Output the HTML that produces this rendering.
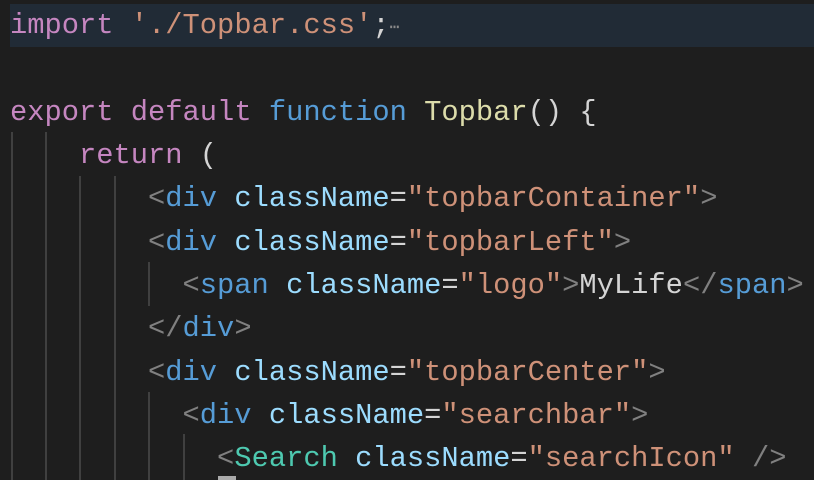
<!DOCTYPE html>
<html><head><meta charset="utf-8"><style>
body{margin:0;width:814px;height:480px;background:#1e1e1e;overflow:hidden;position:relative;font-family:"Liberation Mono",monospace;font-size:28.75px;}
.l{position:absolute;left:10px;height:43.4px;line-height:43.4px;white-space:pre;color:#d4d4d4;}
.k{color:#c586c0}.s{color:#ce9178}.b{color:#569cd6}.f{color:#dcdcaa}.a{color:#9cdcfe}.g{color:#808080}.c{color:#4ec9b0}
.hl{position:absolute;left:10px;top:4px;width:804px;height:43px;background:#212b36;}
.v{position:absolute;width:2px;background:#404040;}
</style></head><body>
<div class="hl"></div>
<div class="v" style="left:11px;top:132px;height:348px"></div>
<div class="v" style="left:45px;top:132px;height:348px"></div>
<div class="v" style="left:79px;top:176px;height:304px"></div>
<div class="v" style="left:114px;top:176px;height:304px"></div>
<div class="v" style="left:148px;top:262px;height:44px"></div>
<div class="v" style="left:148px;top:392px;height:88px"></div>
<div class="v" style="left:183px;top:434px;height:46px"></div>
<div class="l" style="top:4px"><span class="k">import</span> <span class="s">'./Topbar.css'</span>;<span style="color:#8a8a8a;font-size:16px;vertical-align:1px">⋯</span></div>
<div class="l" style="top:91px"><span class="k">export</span> <span class="k">default</span> <span class="b">function</span> <span class="f">Topbar</span>() {</div>
<div class="l" style="top:134px">    <span class="k">return</span> (</div>
<div class="l" style="top:177px">        <span class="g">&lt;</span><span class="b">div</span> <span class="a">className</span>=<span class="s">"topbarContainer"</span><span class="g">&gt;</span></div>
<div class="l" style="top:221px">        <span class="g">&lt;</span><span class="b">div</span> <span class="a">className</span>=<span class="s">"topbarLeft"</span><span class="g">&gt;</span></div>
<div class="l" style="top:264px">          <span class="g">&lt;</span><span class="b">span</span> <span class="a">className</span>=<span class="s">"logo"</span><span class="g">&gt;</span>MyLife<span class="g">&lt;/</span><span class="b">span</span><span class="g">&gt;</span></div>
<div class="l" style="top:307px">        <span class="g">&lt;/</span><span class="b">div</span><span class="g">&gt;</span></div>
<div class="l" style="top:351px">        <span class="g">&lt;</span><span class="b">div</span> <span class="a">className</span>=<span class="s">"topbarCenter"</span><span class="g">&gt;</span></div>
<div class="l" style="top:394px">          <span class="g">&lt;</span><span class="b">div</span> <span class="a">className</span>=<span class="s">"searchbar"</span><span class="g">&gt;</span></div>
<div class="l" style="top:437px">            <span class="g">&lt;</span><span class="c">Search</span> <span class="a">className</span>=<span class="s">"searchIcon"</span> <span class="g">/&gt;</span></div>
<div style="position:absolute;left:218px;top:476px;width:18px;height:4px;background:#aaa"></div>
</body></html>
